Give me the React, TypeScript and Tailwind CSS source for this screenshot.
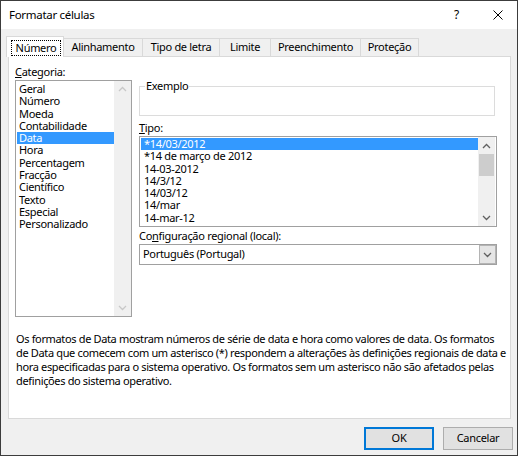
import React from "react";

const Chev = ({ up, color }: { up?: boolean; color: string }) => (
  <svg width="9" height="6" viewBox="0 0 9 6">
    <polyline
      points={up ? "1,5 4.5,1.5 8,5" : "1,1 4.5,4.5 8,1"}
      fill="none"
      stroke={color}
      strokeWidth="1.3"
    />
  </svg>
);

const categories = [
  "Geral",
  "Número",
  "Moeda",
  "Contabilidade",
  "Data",
  "Hora",
  "Percentagem",
  "Fracção",
  "Científico",
  "Texto",
  "Especial",
  "Personalizado",
];

const tipos = [
  "*14/03/2012",
  "*14 de março de 2012",
  "14-03-2012",
  "14/3/12",
  "14/03/12",
  "14/mar",
  "14-mar-12",
];

export default function App() {
  return (
    <div className="w-[520px] h-[457px] bg-white font-['Noto_Sans',sans-serif] text-[11px] tracking-[-0.3px] text-black">
      <div className="w-[518px] h-[456px] border border-[#3c3c3c] bg-[#f0f0f0] flex flex-col">
        {/* Title bar */}
        <div className="h-[28px] bg-white flex items-center pl-[8px] pr-[14px]">
          <span className="text-[11.5px]">Formatar células</span>
          <span className="ml-auto text-[12px]">?</span>
          <svg className="ml-[34px]" width="10" height="10" viewBox="0 0 10 10">
            <path d="M0.5 0.5 L9.5 9.5 M9.5 0.5 L0.5 9.5" stroke="#000" strokeWidth="1" />
          </svg>
        </div>

        {/* Tabs */}
        <div className="pt-[7px] pl-[5px] flex items-end h-[27px]">
          <div className="relative z-10 mb-[-1px] w-[58px] h-[21px] bg-white border border-b-0 border-[#d9d9d9] flex items-start justify-center pt-[3px] pl-[2px]">
            <span className="border border-dotted border-black px-[4px] leading-[14px]">Número</span>
          </div>
          <div className="w-[79px] h-[18px] border-t border-r border-[#d9d9d9] flex items-center justify-center">Alinhamento</div>
          <div className="w-[77px] h-[18px] border-t border-r border-[#d9d9d9] flex items-center justify-center">Tipo de letra</div>
          <div className="w-[51px] h-[18px] border-t border-r border-[#d9d9d9] flex items-center justify-center">Limite</div>
          <div className="w-[90px] h-[18px] border-t border-r border-[#d9d9d9] flex items-center justify-center">Preenchimento</div>
          <div className="w-[58px] h-[18px] border-t border-r border-[#d9d9d9] flex items-center justify-center">Proteção</div>
        </div>

        {/* Panel */}
        <div className="ml-[7px] w-[503px] h-[363px] bg-white border border-[#d9d9d9] flex flex-col pl-[6px] pt-[7px]">
          <div className="flex">
            {/* Left column */}
            <div className="w-[117px] flex flex-col">
              <div className="h-[16px] leading-[16px]">
                <span className="underline">C</span>ategoria:
              </div>
              <div className="h-[237px] border border-[#a0a0a0] flex">
                <div className="flex-1 pt-[2px] pl-[1px]">
                  {categories.map((c) => (
                    <div
                      key={c}
                      className={
                        c === "Data"
                          ? "h-[12.3px] leading-[12.3px] pl-[2px] bg-[#3399ff] text-white"
                          : "h-[12.3px] leading-[12.3px] pl-[2px]"
                      }
                    >
                      {c}
                    </div>
                  ))}
                </div>
                <div className="w-[17px] bg-[#f0f0f0] flex flex-col items-center justify-between py-[5px]">
                  <Chev up color="#c8c8c8" />
                  <Chev color="#c8c8c8" />
                </div>
              </div>
            </div>

            {/* Right column */}
            <div className="ml-[7px] w-[358px] flex flex-col">
              <div className="relative mt-[22px] w-[356px] h-[30px] border border-[#dcdcdc]">
                <span className="absolute left-[5px] top-[-9px] bg-white px-[1px] leading-[16px]">Exemplo</span>
              </div>
              <div className="mt-[4px] h-[16px] leading-[16px]">
                <span className="underline">T</span>ipo:
              </div>
              <div className="h-[91px] border border-[#a0a0a0] flex">
                <div className="flex-1 pt-[1px] pl-[1px]">
                  {tipos.map((t, i) => (
                    <div
                      key={t}
                      className={
                        i === 0
                          ? "h-[12.3px] leading-[12.3px] pl-[3px] bg-[#3399ff] text-white"
                          : "h-[12.3px] leading-[12.3px] pl-[3px]"
                      }
                    >
                      {t}
                    </div>
                  ))}
                </div>
                <div className="w-[17px] mr-[1px] bg-[#f0f0f0] flex flex-col items-center">
                  <div className="h-[17px] flex items-center justify-center">
                    <Chev up color="#606060" />
                  </div>
                  <div className="w-[15px] h-[22px] bg-[#cdcdcd]" />
                  <div className="flex-1" />
                  <div className="h-[17px] flex items-center justify-center">
                    <Chev color="#606060" />
                  </div>
                </div>
              </div>
              <div className="mt-[1px] h-[16px] leading-[16px]">
                Co<span className="underline">n</span>figuração regional (local):
              </div>
              <div className="h-[21px] border border-[#a0a0a0] flex items-stretch">
                <div className="flex-1 flex items-center pl-[3px]">Português (Portugal)</div>
                <div className="w-[17px] bg-[#e5e5e5] border border-[#b4b4b4] flex items-center justify-center">
                  <Chev color="#606060" />
                </div>
              </div>
            </div>
          </div>

          {/* Description */}
          <div className="mt-[15px] pl-[1px] leading-[14px] whitespace-nowrap tracking-[-0.35px]">
            Os formatos de Data mostram números de série de data e hora como valores de data. Os formatos
            <br />
            de Data que comecem com um asterisco (*) respondem a alterações às definições regionais de data e
            <br />
            hora especificadas para o sistema operativo. Os formatos sem um asterisco não são afetados pelas
            <br />
            definições do sistema operativo.
          </div>
        </div>

        {/* Buttons */}
        <div className="mt-[8px] flex justify-end gap-[9px] pr-[4px]">
          <div className="w-[70px] h-[23px] bg-[#e1e1e1] border border-[#0078d7] shadow-[inset_0_0_0_1px_#0078d7] flex items-center justify-center">
            OK
          </div>
          <div className="w-[70px] h-[23px] bg-[#e1e1e1] border border-[#adadad] flex items-center justify-center">
            Cancelar
          </div>
        </div>
      </div>
    </div>
  );
}
